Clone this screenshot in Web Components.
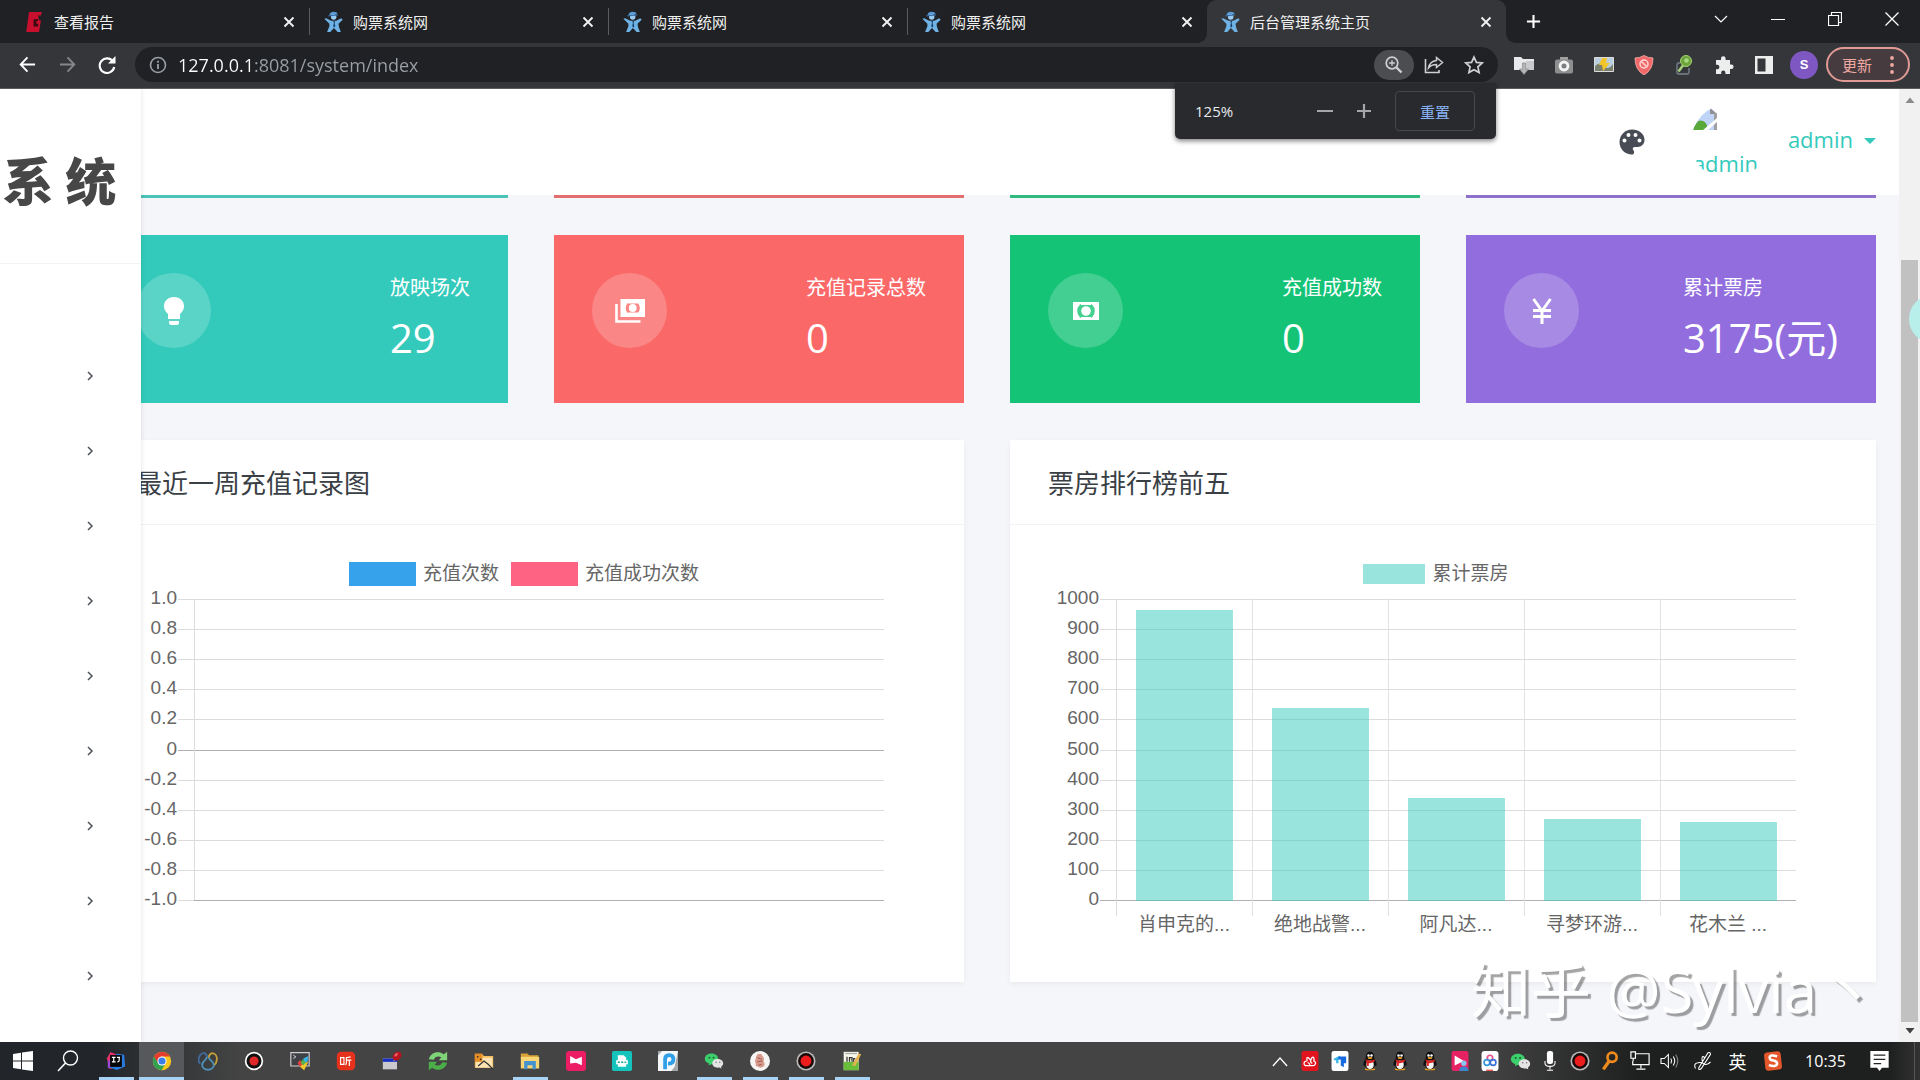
<!DOCTYPE html>
<html lang="zh-CN">
<head>
<meta charset="utf-8">
<title>后台管理系统主页</title>
<style>
*{box-sizing:border-box}
html,body{height:100%;margin:0}
body{display:flex;flex-direction:column;overflow:hidden;font-family:"Open Sans","Noto Sans CJK SC",sans-serif;font-size:15px;background:#f5f6fa;color:#4d5259}
admin-page{flex:1;min-height:0}
</style>
</head>
<body>
<browser-chrome></browser-chrome>
<admin-page></admin-page>
<task-bar></task-bar>
<script>
const RESET = '*{box-sizing:border-box}button{font:inherit;color:inherit;background:none;border:0;padding:0;margin:0;display:flex;align-items:center;justify-content:center}a{color:inherit;text-decoration:none}';

/* icon set: name -> [viewBox, markup] */
const PENGUIN = ['0 0 20 24','<path d="M6 23q-3 0-2-2h12q1 2-2 2z" fill="#e8a020"/><path d="M10 1c4 0 5 3 5 7 1 3 3 5 3 8 0 2-1 2-2 1-1 4-3 5-6 5s-5-1-6-5c-1 1-2 1-2-1 0-3 2-5 3-8 0-4 1-7 5-7z" fill="#101010"/><ellipse cx="10" cy="16.500" rx="4.500" ry="5" fill="#f5f5f5"/><circle cx="8.200" cy="5.500" r="1.500" fill="#fff"/><circle cx="11.800" cy="5.500" r="1.500" fill="#fff"/><ellipse cx="10" cy="8.300" rx="3" ry="1.200" fill="#f0a020"/><path d="M4.500 10q5.500 3 11 0v3q-4 2-7 1.600V18H6v-4z" fill="#d82424"/>'];
const RECORD = ['0 0 24 24','<circle cx="12" cy="12" r="11.500" fill="#b9b9b9"/><circle cx="12" cy="12" r="9.500" fill="#1a0a0a"/><circle cx="12" cy="12" r="6.500" fill="#ee1c1c"/>'];
const WECHAT = ['0 0 24 24','<path d="M9 3c5 0 8 3 8 6.500S14 16 9 16l-3.500 1 .5-2C3 14 1 12 1 9.500 1 6 4 3 9 3z" fill="#3ccf6c"/><circle cx="6.500" cy="8" r="1.100" fill="#155c2d"/><circle cx="11.500" cy="8" r="1.100" fill="#155c2d"/><path d="M16.500 9.500c3.500 0 6.500 2 6.500 5.200 0 2-1 3.300-2.500 4.200l.5 2-2.500-1c-5 .8-8.500-1.700-8.500-5.200s3-5.200 6.500-5.200z" fill="#e4e4e4"/><circle cx="14.500" cy="13.500" r=".9" fill="#777"/><circle cx="19" cy="13.500" r=".9" fill="#777"/>'];
const ICONS = {
 report:['0 0 18 24','<path d="M3 1h14l-1 4h-3l1 5h2l-2 13H0z" fill="#c8102e"/><path d="M8 9h5v2h-2v3h2v3H8z" fill="#3a0a12"/>'],
 mascot:['0 0 20 24','<path d="M5.500 4.500Q6 1 10 .8q4 0 4.500 2.700z" fill="#5b9bd5"/><circle cx="10.200" cy="6.500" r="3" fill="#9accf2"/><path d="M4.500 5.300l10.500-1" stroke="#3a70a8" stroke-width="1.200"/><path d="M0 8.500l2-.5 5.500 2.500h5.500L18.500 8l1.500 1.500L15.500 14l.5 3.500 2 5.500h-3.500l-4-4.500L6.500 23H3l2.500-6.500V14z" fill="#6fb2e6"/><path d="M9.800 11h2l-.6 2 .8 3.500-1.200 1.500-1.100-1.500.7-3.500z" fill="#17416b"/>'],
 close:['0 0 12 12','<path d="M1.500 1.500l9 9M10.500 1.500l-9 9" stroke="currentColor" stroke-width="1.900" fill="none"/>'],
 plus:['0 0 16 16','<path d="M8 1v14M1 8h14" stroke="currentColor" stroke-width="2.200"/>'],
 minus:['0 0 16 16','<path d="M0 8h16" stroke="currentColor" stroke-width="2"/>'],
 wdown:['0 0 14 14','<path d="M1 4l6 6 6-6" stroke="currentColor" fill="none" stroke-width="1.200"/>'],
 wmin:['0 0 14 14','<path d="M0 7.500h14" stroke="currentColor"/>'],
 wmax:['0 0 14 14','<path d="M.5 3.500h10v10H.5zM3.500 3V.5h10v10H11" stroke="currentColor" fill="none" stroke-width="1.200"/>'],
 wclose:['0 0 14 14','<path d="M.5.5l13 13M13.500.5l-13 13" stroke="currentColor" stroke-width="1.300"/>'],
 back:['0 0 18 18','<path d="M17 9H2M9 1.500L1.800 9 9 16.500" stroke="currentColor" stroke-width="2" fill="none"/>'],
 fwd:['0 0 18 18','<path d="M1 9h15M9 1.500L16.200 9 9 16.500" stroke="currentColor" stroke-width="2" fill="none"/>'],
 reload:['0 0 18 18','<path d="M15 5.500A7.300 7.300 0 1 0 16.200 11" stroke="currentColor" stroke-width="2.100" fill="none"/><path d="M17.500 0v7.500H10z" fill="currentColor"/>'],
 info:['0 0 18 18','<circle cx="9" cy="9" r="7.500" stroke="currentColor" stroke-width="1.600" fill="none"/><path d="M9 8v5M9 4.700v2" stroke="currentColor" stroke-width="1.800"/>'],
 zoom:['0 0 18 18','<circle cx="7" cy="7" r="5.800" stroke="currentColor" stroke-width="1.700" fill="none"/><path d="M4.200 7h5.600M7 4.200v5.600" stroke="currentColor" stroke-width="1.300"/><path d="M11.500 11.500l5 5" stroke="currentColor" stroke-width="2.400"/>'],
 share:['0 0 20 20','<path d="M1.500 4v13.500H15V15" stroke="currentColor" stroke-width="1.600" fill="none"/><path d="M12.500 2.500l6 5-6 5V9.600c-4 0-6 1-8 3.400.8-4.500 3.600-7.200 8-7.600z" stroke="currentColor" stroke-width="1.500" fill="none"/>'],
 star:['0 0 20 20','<path d="M10 2l2.400 5.400 5.800.6-4.300 3.900 1.200 5.700-5.100-2.900-5.100 2.900 1.200-5.700L1.800 8l5.800-.6z" stroke="currentColor" stroke-width="1.700" fill="none"/>'],
 folder:['0 0 20 20','<path d="M0 2h7l2 2h11v11H0z" fill="#e8e9ea"/><path d="M12 6h8v9h-8z" fill="#c9cacc"/><path d="M8.500 8h3v6h3L10 19.500 5.500 14h3z" fill="#b4b5b7" stroke="#8a8b8d" stroke-width=".7"/>'],
 camera:['0 0 20 20','<path d="M6 2h8v3H6z" fill="#a0a0a0"/><rect x="1" y="4.500" width="18" height="14" rx="2" fill="#8d8e90"/><circle cx="10" cy="11" r="5.400" fill="#f4f4f4"/><circle cx="10" cy="11" r="2.500" fill="#7c7d80"/>'],
 picture:['0 0 20 20','<path d="M.5 2.500h19v14H.5z" fill="#b9cfdf" stroke="#ddd"/><path d="M1 11q5-5 9 0t9-2v7H1z" fill="#79806e"/><path d="M8 3h5l-1 5h4l-7 8-1-6H5z" fill="#f3c52b"/>'],
 shield:['0 0 20 20','<path d="M10 .5q4 2.500 9 2.500 0 12-9 17Q1 15 1 3q5 0 9-2.500z" fill="#f0686a" stroke="#ffb4b0" stroke-width=".8"/><circle cx="10" cy="9" r="4" stroke="#ffd8d4" stroke-width="1.500" fill="none"/><path d="M7.500 6.500l5 5" stroke="#ffd8d4" stroke-width="1.500"/>'],
 racket:['0 0 20 20','<path d="M6 8H5q-2 0-2 2v7q0 2 2 2h8q2 0 2-2v-4" stroke="#68707a" stroke-width="1.800" fill="none"/><path d="M4.500 16.500L10 9" stroke="#a5cf78" stroke-width="2.500"/><circle cx="12" cy="6" r="5.500" fill="#6da43e" stroke="#a5d56f"/><circle cx="12.500" cy="5.500" r="2.200" fill="#a9d880"/>'],
 puzzle:['0 0 20 20','<path d="M2 5h5V3.500a2.300 2.300 0 0 1 4.600 0V5H16v4.500h1.300a2.300 2.300 0 0 1 0 4.600H16V19h-4.600v-1.500a2 2 0 0 0-4.200 0V19H2v-4.800h1.200a2.200 2.200 0 0 0 0-4.400H2z" fill="#eceded"/>'],
 panel:['0 0 20 20','<path d="M1 1h18v18H1z" fill="#eceded"/><path d="M3.500 3.500h8v13h-8z" fill="#35363a"/>'],
 dots:['0 0 4 18','<circle cx="2" cy="2" r="1.900" fill="currentColor"/><circle cx="2" cy="9" r="1.900" fill="currentColor"/><circle cx="2" cy="16" r="1.900" fill="currentColor"/>'],
 palette:['0 0 26 26','<path fill-rule="evenodd" d="M13 .5C20 .5 25.500 5 25.500 11c0 4-3 7-7 7h-2.500c-2.300 0-2.800 1.900-1.600 3.200 1.500 1.800.6 4.300-1.400 4.300C6 25.500.5 20 .5 13S6 .5 13 .5zM5.500 9.500a2 2 0 1 0 0 4 2 2 0 0 0 0-4zm4-5.500a2 2 0 1 0 0 4 2 2 0 0 0 0-4zm7 0a2 2 0 1 0 0 4 2 2 0 0 0 0-4zm4 5.500a2 2 0 1 0 0 4 2 2 0 0 0 0-4z" fill="#484c55"/>'],
 broken:['0 0 24 22','<path d="M0 0h18l6 6v16H0z" fill="#c0d4f7"/><path d="M17 0v6h7z" fill="#8f8f8f"/><path d="M22.500 5v17" stroke="#a0a0a0" stroke-width="3"/><path d="M0 22q4-12 10-9 4 1 5 9z" fill="#58a83a"/><path d="M9 23L24 10v4L14 23z" fill="#fff"/>'],
 caret:['0 0 12 6','<path d="M0 0h12L6 6z" fill="currentColor"/>'],
 chev:['0 0 8 10','<path d="M2 1l4 4-4 4" stroke="#4d5259" stroke-width="1.500" fill="none"/>'],
 bulb:['0 0 24 32','<path d="M12 2c6 0 10 4 10 9 0 4-2 6-4 8v5H6v-5c-2-2-4-4-4-8 0-5 4-9 10-9zM7 26h10v1.500q0 2.500-2.500 2.500h-5Q7 30 7 27.500z" fill="#fff"/>'],
 moneys:['0 0 30 26','<path d="M1.500 6v17.500h24" stroke="#fff" stroke-width="2.600" fill="none"/><path d="M5.500 1H30v18H5.500z" fill="#fff"/><circle cx="17.750" cy="10" r="5.500" stroke="#fb8686" stroke-width="3.200" fill="none"/><path d="M13 1h10v4.500H13zM13 14.500h10V19H13z" fill="#fff"/>'],
 money:['0 0 26 18','<path d="M0 0h26v18H0z" fill="#fff"/><circle cx="13" cy="9" r="6.800" stroke="#44d08f" stroke-width="4" fill="none"/><path d="M8 0h10v3H8zM8 15h10v3H8z" fill="#fff"/>'],
 yen:['0 0 20 26','<path d="M1.500 1L10 13l8.500-12M10 12v14M1 12.500h18M1 18.500h18" stroke="#fff" stroke-width="3" fill="none"/>'],
 sup:['0 0 16 16','<path d="M3.500 11L8 5.500l4.500 5.500z" fill="#8b8b8b"/>'],
 sdown:['0 0 16 16','<path d="M3.500 5L8 10.500 12.500 5z" fill="#404040"/>'],
 win:['0 0 20 20','<path d="M0 3l8-1.200V9.500H0zM9 1.600L20 0v9.500H9zM0 10.500h8v7.700L0 17zM9 10.500h11V20L9 18.400z" fill="#fff"/>'],
 search:['0 0 22 22','<circle cx="13.500" cy="8" r="7" stroke="#fff" stroke-width="1.400" fill="none"/><path d="M8.500 13L1 21" stroke="#fff" stroke-width="1.600"/>'],
 idea:['0 0 22 22','<path d="M1 8L5 1l7 3-2 14-6 2z" fill="#e6336e"/><path d="M12 3l8 1 1 13-9 4-9-3 1-4z" fill="#2a7be0"/><path d="M2 11l4-2v8l-4 2z" fill="#9b4bd8"/><path d="M4.500 4.500h13v13h-13z" fill="#060606"/><path d="M6.500 7h4M8.500 7v5M6.500 12h4M12 7h3.500M14.500 7v3.500q0 1.500-2 1.500" stroke="#fff" stroke-width="1.300" fill="none"/>'],
 chrome:['0 0 24 24','<circle cx="12" cy="12" r="11" fill="#f8c51c"/><path d="M2.500 6.500A11 11 0 0 0 11.500 23l5-8.500L12 12z" fill="#31a350"/><path d="M2.500 6.500A11 11 0 0 1 21.600 6.700H11L7 14z" fill="#e33b2e"/><circle cx="12" cy="12" r="5.500" fill="#fff"/><circle cx="12" cy="12" r="4.300" fill="#3b7ded"/>'],
 navicat:['0 0 24 24','<path d="M11 7C10 2 5 1 2.500 5S0 14 3 15" stroke="#416a9e" stroke-width="2.200" fill="none"/><path d="M13 8c0-4 3-6 6-5s4 5 3.500 8-2 6-4.500 6" stroke="#c5a13a" stroke-width="2.200" fill="none"/><path d="M11 7C9 12 5 12 5 17c0 3 3 5.500 7 5.500s7-2.500 7-5.500c0-5-5-5-6-9" stroke="#4d91b8" stroke-width="2.200" fill="none"/>'],
 recw:['0 0 24 24','<circle cx="12" cy="12" r="11" fill="#fff"/><circle cx="12" cy="12" r="9" fill="#111"/><circle cx="12" cy="12" r="5.500" fill="#e02828"/>'],
 term:['0 0 24 24','<path d="M1 2h22v16H1z" fill="#3d4145" stroke="#cfcfcf" stroke-width="1.400"/><path d="M4 5l3 2-3 2" stroke="#eee" fill="none"/><path d="M12 11l4 4-4 4-3-5z" fill="#e9403a"/><path d="M16 9l6-3-1 7-4 2z" fill="#38b3e8"/><path d="M16 15l6-2-5 10-5-4z" fill="#f2c42d"/><path d="M15 10l4 4-3 3-3-3z" fill="#54b64a"/>'],
 ting:['0 0 24 24','<rect x="1" y="1" width="22" height="22" rx="5" fill="#e6321c"/><path d="M5.500 8h4v8h-4zM17.500 7l-5 1v5q0 3-1 4M12.500 11h6M16 11v7" stroke="#fff" stroke-width="1.400" fill="none"/>'],
 pinwin:['0 0 24 24','<path d="M1 9h17v13H1z" fill="#c9c9ce"/><path d="M1 9h17v4H1z" fill="#1830c0"/><path d="M14 12l2-4" stroke="#999" stroke-width="1.500"/><ellipse cx="18" cy="6" rx="6" ry="4.500" transform="rotate(-45 18 6)" fill="#b81420"/><ellipse cx="17" cy="4.500" rx="2.500" ry="1.500" transform="rotate(-45 17 4.500)" fill="#e86068"/>'],
 sync:['0 0 24 24','<path d="M1 10C3 2 12-1 19 4l4-3v10H13l3-3.500c-4-2-8-.5-9 3z" fill="#7fd477"/><path d="M23 14c-2 8-11 11-18 6l-4 3V13h10l-3 3.500c4 2 8 .5 9-3z" fill="#4cae48"/>'],
 cards:['0 0 24 24','<path d="M1 4h9l2 2h11v14H1z" fill="#f5bd5c"/><path d="M2 8h20v12H2z" fill="#fde3b2"/><path d="M1 3h9v10H1z" fill="#e58d27"/><circle cx="4.500" cy="7" r="1" fill="#222"/><circle cx="8" cy="10" r="1" fill="#222"/><path d="M5 18l7-6 5 4 6 6" stroke="#333" fill="none" stroke-width="1.500"/>'],
 files:['0 0 24 24','<path d="M1 3h8l2 2h11v4H1z" fill="#d9a436"/><path d="M1 7h22v14H1z" fill="#f8d675"/><path d="M5 12h14v10h-4v-5H9v5H5z" fill="#4492cf"/>'],
 pinkapp:['0 0 24 24','<rect width="24" height="24" rx="4" fill="#ec1c65"/><path d="M5 6l7 4 7-3v10l-7-3-7 1z" fill="#fff"/>'],
 pdf:['0 0 24 24','<rect width="24" height="24" rx="2" fill="#14c3bb"/><path d="M7 5h7l3 3v11H7z" fill="#fff"/><path d="M5 11h14v5H5z" fill="#fff"/><path d="M7 13.500h2.500M11 13.500h2.500M15 13.500h2" stroke="#14a39b" stroke-width="1.800"/>'],
 papp:['0 0 24 24','<path d="M0 0h24v24H0z" fill="#a5a8aa"/><path d="M5 0h19L20 19 16 24H0V5z" fill="#f4f8fa"/><path d="M8.500 22V10q0-5 5-5t5 5-5 5H12" stroke="#2f9fe8" stroke-width="4.500" fill="none"/>'],
 brain:['0 0 24 24','<circle cx="12" cy="12" r="12" fill="#f6f5f3"/><path d="M9 4q5-2 6 2 3 3 1 6 3 4 0 7-4 2-6 0-4 0-3-4-2-3 0-6 0-3 2-5z" fill="#d99a8d"/><path d="M9 8l5 2M9 13l6-1M10 17l4-1" stroke="#8d4e46"/>'],
 note:['0 0 24 24','<path d="M2 1h18v22H2z" fill="#f5f5e8"/><path d="M2 13h18v10H2z" fill="#6abd3b"/><path d="M4 3h14" stroke="#aaa" stroke-width="1.500"/><path d="M6 13V7M9 13V8h3v5M14 13V9h2" stroke="#333" stroke-width="1.500" fill="none"/><path d="M12 17L20 3l3 1-7 14z" fill="#e3b24d"/>'],
 up:['0 0 18 12','<path d="M1 11L9 2l8 9" stroke="#fff" stroke-width="1.500" fill="none"/>'],
 redcloud:['0 0 22 26','<rect width="22" height="26" rx="3" fill="#e2141e"/><path d="M5 19q-3-2-1-5 1-1 3-1V9q2-1 3 1l2 2q1-4 3-4 2 1 1 5 3 1 2 4-1 2-3 2zM8 15q2 0 3 3M12 12q-1 3 2 4" stroke="#fff" stroke-width="1.600" fill="none"/>'],
 todesk:['0 0 22 26','<rect width="22" height="26" rx="3" fill="#fff"/><path d="M3 10l8-4v5H9v5H6v-4H3z" fill="#35b4e9"/><path d="M9 7h10v9h-3v5l-4-2v-8H9z" fill="#1769e0"/>'],
 penguin:PENGUIN, record:RECORD, wechat:WECHAT,
 pinkuser:['0 0 22 26','<rect width="22" height="26" rx="3" fill="#e62263"/><path d="M4 6l12 7-12 6z" fill="#fff"/><circle cx="16" cy="16" r="3.500" fill="#8fc4f0"/><path d="M10 26q0-6 6-6t6 6z" fill="#3c86d0"/>'],
 netdisk:['0 0 22 26','<rect width="22" height="26" rx="4" fill="#fff"/><circle cx="11" cy="9" r="3.500" stroke="#e6518c" stroke-width="2.200" fill="none"/><circle cx="7" cy="15" r="3.700" stroke="#3498db" stroke-width="2.200" fill="none"/><circle cx="15" cy="15" r="3.700" stroke="#3a70d8" stroke-width="2.200" fill="none"/><path d="M6 25h9" stroke="#d33" stroke-width="1.500"/>'],
 mic:['0 0 16 26','<rect x="4" y="0" width="8" height="17" rx="3" fill="#fff"/><path d="M1.500 13v3q0 4 6.500 4t6.500-4v-3M8 20v4M4 25h8" stroke="#fff" stroke-width="1.400" fill="none"/>'],
 orange:['0 0 20 24','<circle cx="12.500" cy="7.500" r="5.500" stroke="#ef8a1c" stroke-width="3.200" fill="none"/><path d="M9 12l-7 10" stroke="#ef8a1c" stroke-width="4"/>'],
 monitor:['0 0 22 22','<path d="M6 3h15v12H3v-4M12 15v4M7 20h10M1 1h5v7H1zM3.500 8v3" stroke="#fff" stroke-width="1.300" fill="none"/>'],
 speaker:['0 0 24 22','<path d="M1 8h4l5-5v16l-5-5H1z" stroke="#fff" stroke-width="1.300" fill="none"/><path d="M13 8q2 3 0 6M16 5.500q3.500 5.500 0 11" stroke="#fff" stroke-width="1.300" fill="none"/><path d="M19 3q5 8 0 16" stroke="#888" stroke-width="1.300" fill="none"/>'],
 pen:['0 0 22 24','<path d="M2 21q-3-6 3-7 5-1 8 2 4 1 7-3M6 20L17 2q3-1 3 2L9 21q-4 3-3-1zM10 12q-1-8 3-4" stroke="#fff" stroke-width="1.300" fill="none"/>'],
 sogou:['0 0 22 24','<rect x="1" y="1" width="20" height="22" rx="4" fill="#e4572a" transform="rotate(-6 11 12)"/><path d="M16 6.500q-9-3-9 1.500 0 3 4.500 3.500t4.500 4q-1 4-10 1.500" stroke="#fff" stroke-width="3" fill="none"/>'],
 action:['0 0 22 24','<path d="M0 0h22v20h-8l-3 4-3-4H0z" fill="#fff"/><path d="M4 5h14M4 10h14M4 15h9" stroke="#222" stroke-width="1.500"/>']
};

class UiIcon extends HTMLElement{
  connectedCallback(){
    const [vb,m]=ICONS[this.getAttribute('name')];
    const w=this.getAttribute('w')||20,h=this.getAttribute('h')||w;
    (this.shadowRoot||this.attachShadow({mode:'open'})).innerHTML=`<style>:host{display:inline-flex;flex:none}svg{display:block}</style><svg width="${w}" height="${h}" viewBox="${vb}" aria-hidden="true">${m}</svg>`;
  }
}
customElements.define('ui-icon',UiIcon);

const define=(name,render)=>customElements.define(name,class extends HTMLElement{
  connectedCallback(){ if(!this.shadowRoot) this.attachShadow({mode:'open'}).innerHTML=`<style>${RESET}</style>`+render(this); }
});
const ic=(n,w,h)=>`<ui-icon name="${n}" w="${w}" h="${h||w}"></ui-icon>`;

define('browser-tab',el=>`
<style>
:host{display:flex;align-items:center;flex:0 1 299px;min-width:0;height:43px;padding:0 14px;color:#f1f1f1;position:relative}
:host([line]){border-right:1px solid transparent;border-image:linear-gradient(transparent 9px,#5a5b5e 9px,#5a5b5e 34px,transparent 34px) 1}
:host([active]){background:#35363a;border-radius:9px 9px 0 0}
:host([active])::before,:host([active])::after{content:"";position:absolute;bottom:0;width:10px;height:10px}
:host([active])::before{left:-10px;background:radial-gradient(circle at 0 0,transparent 10px,#35363a 10px)}
:host([active])::after{right:-10px;background:radial-gradient(circle at 100% 0,transparent 10px,#35363a 10px)}
span{flex:1;margin-left:10px;line-height:24px;white-space:nowrap}
</style>${ic(el.getAttribute('icon'),19,22)}<span><slot></slot></span><button aria-label="关闭">${ic('close',12)}</button>`);

define('zoom-bubble',()=>`
<style>
:host{display:flex;align-items:center;width:321px;height:56px;padding:0 21px 0 20px;background:#292a2d;border-radius:0 0 5px 5px;box-shadow:0 2px 5px rgba(0,0,0,.5);color:#e8eaed}
span{flex:1}
.g{display:flex;gap:23px;color:#a5a6a8;margin-right:23px}
.r{width:80px;height:40px;border:1px solid #46474b;border-radius:4px;color:#8ab4f8}
</style><span>125%</span><div class="g"><button aria-label="缩小">${ic('minus',16)}</button><button aria-label="放大">${ic('plus',16)}</button></div><button class="r">重置</button>`);

define('browser-chrome',()=>`
<style>
:host{display:block;background:#202124;color:#fff;position:relative;z-index:5;flex:none}
.tabs{display:flex;height:43px;padding-left:11px}
.new{width:54px;padding-bottom:1px}
.win{display:flex;margin-left:auto;padding-bottom:6px}
.win button{width:57px}
.bar{display:flex;align-items:center;height:46px;padding:0 10px 2px 7px;background:#35363a;border-bottom:1px solid #5b5c60}
.bar>button{width:40px;height:34px}
.off{color:#85868a}
.omni{flex:1;display:flex;align-items:center;height:35px;background:#202124;border-radius:18px;margin:0 6px 0 8px;padding:0 4px 0 14px;color:#9aa0a6}
.omni button{width:40px;height:30px;border-radius:15px;color:#cfd0d2}
.omni .z{background:#4c4d50}
input{flex:1;min-width:0;border:0;outline:0;padding:0;margin-left:11px;height:30px;font:inherit;font-size:18px;color:transparent;background:linear-gradient(90deg,#fff 77px,#9aa0a6 77px);-webkit-background-clip:text;background-clip:text}
.bar .me{width:28px;height:28px;margin:0 6px;border-radius:50%;background:#7e57c2;font:bold 13px "Liberation Sans",sans-serif}
.bar .up{width:84px;height:35px;margin-left:2px;gap:18px;border:2px solid #e09a96;border-radius:18px;background:#463c3f;color:#f0a8a2}
zoom-bubble{position:absolute;right:424px;top:83px}
</style>
<div class="tabs">
<browser-tab icon="report" line>查看报告</browser-tab><browser-tab icon="mascot" line>购票系统网</browser-tab><browser-tab icon="mascot" line>购票系统网</browser-tab><browser-tab icon="mascot">购票系统网</browser-tab><browser-tab icon="mascot" active>后台管理系统主页</browser-tab>
<button class="new" aria-label="新标签页">${ic('plus',15)}</button>
<div class="win">${[['wdown','搜索标签页'],['wmin','最小化'],['wmax','还原'],['wclose','关闭']].map(([n,l])=>`<button aria-label="${l}">${ic(n,14)}</button>`).join('')}</div>
</div>
<div class="bar">
<button aria-label="后退">${ic('back',17)}</button><button class="off" aria-label="前进">${ic('fwd',17)}</button><button aria-label="刷新">${ic('reload',18)}</button>
<div class="omni">${ic('info',18)}<input aria-label="地址" value="127.0.0.1:8081/system/index"><button class="z" aria-label="缩放">${ic('zoom',18)}</button><button aria-label="分享">${ic('share',20)}</button><button aria-label="收藏">${ic('star',20)}</button></div>
${['folder','camera','picture','shield','racket','puzzle','panel'].map(n=>`<button aria-label="${n}">${ic(n,20)}</button>`).join('')}
<button class="me">S</button><button class="up">更新${ic('dots',4,18)}</button>
</div><zoom-bubble></zoom-bubble>`);

define('side-nav',()=>`
<style>
:host{display:block;flex:0 0 141px;background:#fff;box-shadow:0 0 5px rgba(0,0,0,.12);overflow:hidden;z-index:2}
h1{margin:0;height:175px;padding:54px 22px 0 0;font:900 51px/72px "Noto Sans CJK SC",sans-serif;color:#474747;white-space:nowrap;border-bottom:1px solid #f3f3f3;text-align:center}
nav{padding-top:74px}
nav button{width:100%;height:75px;padding-left:39px}
</style><h1>系 统</h1><nav>${Array(9).fill(`<button aria-label="展开">${ic('chev',8,10)}</button>`).join('')}</nav>`);

define('top-bar',()=>`
<style>
:host{display:flex;align-items:center;justify-content:flex-end;height:106px;padding-right:23px;background:#fff;color:#33cabb;font-size:22px;line-height:30px}
.av{width:76px;height:76px;margin:0 21px 0 46px;border-radius:50%;overflow:hidden;display:block;padding:1px 0 0 2px;text-align:left}
.av ui-icon,.av span{display:block}
.av span{margin-top:18px}
.u{gap:11px;padding-bottom:6px}
.u ui-icon{padding-top:4px}
</style><button aria-label="主题">${ic('palette',26)}</button><button class="av">${ic('broken',24,22)}<span>admin</span></button><button class="u">admin ${ic('caret',12,6)}</button>`);

define('stat-card',el=>`
<style>
:host{display:flex;justify-content:space-between;height:168px;padding:38px;background:var(--c);color:#fff}
.i{width:75px;height:75px;border-radius:50%;background:rgba(255,255,255,.2);display:flex;align-items:center;justify-content:center}
p{margin:0 0 10px;font-size:20px;line-height:30px}
strong{display:block;font-weight:400;font-size:40px;line-height:50px}
</style><div class="i"><slot></slot></div><div><p>${el.getAttribute('label')}</p><strong>${el.getAttribute('value')}</strong></div>`);

define('chart-panel',el=>`
<style>
:host{display:block;background:#fff;height:542px;box-shadow:0 2px 5px rgba(0,0,0,.05)}
h2{margin:0;height:85px;padding:0 38px;font-weight:400;font-size:26px;line-height:87px;color:#3a3f46;border-bottom:1px solid #f2f2f3}
</style><h2>${el.getAttribute('heading')}</h2><slot></slot>`);

define('bar-chart',el=>{
  const d=JSON.parse(el.getAttribute('data'));
  return `
<style>
:host{display:block;padding:37px 80px 0 38px;font:19px/24px "Liberation Sans","Noto Sans CJK SC",sans-serif;color:#666}
.leg{display:flex;justify-content:center;gap:12px;height:24px;margin:0 -66px 13px -38px}
.leg span{display:flex;align-items:center;gap:7px}
.leg i{width:var(--sw,67px);height:var(--sh,24px)}
.plot{display:grid;height:317px;grid-template-columns:${d.lw}px 16px 1fr;grid-template-rows:repeat(10,minmax(0,1fr)) 16px}
.lab{grid-column:1;text-align:right;height:24px;margin-top:-13px;padding-right:1px}
.t{border-top:1px solid #dcdcdc;grid-column:2/4}
.z{border-color:#b0b0b0}
.cols{grid-column:3;grid-row:1/12;display:flex;border-left:1px solid #dcdcdc}
.col{flex:1;display:flex;align-items:flex-end;justify-content:center;padding-bottom:15px}
.col+.col{border-left:1px solid #e2e2e2}
.col i{width:72%;background:rgba(51,202,187,.5)}
.x{display:flex;margin-left:${d.lw+16}px;margin-top:-3px}
.x span{flex:1;text-align:center}
.short{margin-bottom:16px}
</style>
<div class="leg">${d.legend.map(([c,t])=>`<span><i style="background:${c}"></i>${t}</span>`).join('')}</div>
<div class="plot">
${d.ticks.map((t,i)=>`<span class="lab" style="grid-row:${i+1}">${t}</span><i class="t ${t==='0'?'z':''}" style="grid-row:${i+1}"></i>`).join('')}
${d.bars.length?'':'<i class="t z" style="grid-row:11;grid-column:3"></i>'}
<div class="cols ${d.bars.length?'':'short'}">${d.bars.map(b=>`<div class="col"><i style="height:${Math.round(b[1]*.301)}px"></i></div>`).join('')}</div>
</div><div class="x">${d.bars.map(b=>`<span>${b[0]}</span>`).join('')}</div>`;});

define('page-scroll',()=>`
<style>
:host{display:flex;flex-direction:column;align-items:center;flex:0 0 21px;background:#f1f1f1;padding:3px 0}
i{width:17px;margin:152px 0 1px;flex:1;background:#c1c1c1}
</style>${ic('sup',16)}<i></i>${ic('sdown',16)}`);

define('admin-page',()=>`
<style>
:host{display:flex;position:relative;overflow:hidden;background:#f5f6fa}
main{flex:1;min-width:0;margin-left:-141px;padding-left:98px}
.edge,.cards,.charts{display:grid;grid-template-columns:repeat(4,1fr);gap:46px;margin-right:23px}
.edge i{height:3px;background:var(--c);filter:saturate(.8)}
.edge{margin-bottom:37px}
.charts{grid-template-columns:repeat(2,1fr);margin-top:37px}
top-bar{margin-left:-98px}
.mark{position:absolute;right:43px;bottom:11px;font-size:60px;line-height:82px;color:#fff;text-shadow:3px 3px 1px rgba(0,0,0,.36);white-space:nowrap}
.fab{position:absolute;right:-37px;top:206px;width:48px;height:48px;border-radius:50%;background:#b9efea}
</style>
<side-nav></side-nav>
<main><top-bar></top-bar>
<div class="edge"><i style="--c:#33cabb"></i><i style="--c:#f96868"></i><i style="--c:#15c377"></i><i style="--c:#926dde"></i></div>
<div class="cards">
<stat-card style="--c:#33cabb" label="放映场次" value="29">${ic('bulb',24,32)}</stat-card>
<stat-card style="--c:#fb6868" label="充值记录总数" value="0">${ic('moneys',30,26)}</stat-card>
<stat-card style="--c:#15c377" label="充值成功数" value="0">${ic('money',26,18)}</stat-card>
<stat-card style="--c:#926dde" label="累计票房" value="3175(元)">${ic('yen',20,26)}</stat-card>
</div>
<div class="charts">
<chart-panel heading="最近一周充值记录图"><bar-chart data='{"lw":42,"legend":[["#36a2eb","充值次数"],["#ff6384","充值成功次数"]],"ticks":["1.0","0.8","0.6","0.4","0.2","0","-0.2","-0.4","-0.6","-0.8","-1.0"],"bars":[]}'></bar-chart></chart-panel>
<chart-panel heading="票房排行榜前五"><bar-chart style="--sw:62px;--sh:20px" data='{"lw":52,"legend":[["#99e5dd","累计票房"]],"ticks":["1000","900","800","700","600","500","400","300","200","100","0"],"bars":[["肖申克的...",968],["绝地战警...",642],["阿凡达...",341],["寻梦环游...",272],["花木兰 ...",262]]}'></bar-chart></chart-panel>
</div></main>
<page-scroll></page-scroll>
<div class="mark">知乎 @Sylvia丶</div><button class="fab" aria-label="助手"></button>`);

define('task-bar',()=>`
<style>
:host{display:flex;flex:none;height:38px;color:#fff;background:linear-gradient(90deg,#22262a 0,#22262a 100px,#444 240px,#444 1480px,#1e1f1f 1640px,#1e1f1f 1890px,#333 1920px)}
button{height:38px;flex:none}
.s{width:45px}
.apps{display:flex;margin:0 auto 0 3px}
.apps button{width:46px}
.run{background:linear-gradient(#a9d3f5,#a9d3f5) center bottom/35px 3px no-repeat}
.apps .on{width:45px;margin-right:1px;background:linear-gradient(#a9d3f5,#a9d3f5) center bottom/45px 3px no-repeat #57585b}
.tray,.sys{display:flex}
.tray button{width:30px}
.sys button{width:35px;font-size:18px}
.sys .clk{width:71px;font-size:16px}
.sys .act{width:36px;margin-right:17px}
.sys .desk{border-left:1px solid #555;width:6px}
</style>
<button class="s" aria-label="开始">${ic('win',20)}</button><button class="s" aria-label="搜索">${ic('search',22)}</button>
<div class="apps">${[['idea',1],['chrome',2],['navicat'],['recw'],['term'],['ting'],['pinwin'],['sync'],['cards'],['files',1],['pinkapp'],['pdf'],['papp'],['wechat',1],['brain',1],['record',1],['note',1]].map(([n,r])=>`<button class="${r==2?'on':r?'run':''}" aria-label="${n}">${ic(n,20)}</button>`).join('')}</div>
<div class="tray">${[['up',16,11],['redcloud',20,20],['todesk',20,20],['penguin',18,20],['penguin',18,20],['penguin',18,20],['pinkuser',20,20],['netdisk',20,20],['wechat',21,21],['mic',14,20],['record',20,20],['orange',18,20],['monitor',20,20],['speaker',20,18]].map(([n,w,h])=>`<button aria-label="${n}">${ic(n,w,h)}</button>`).join('')}</div>
<div class="sys"><button aria-label="手写">${ic('pen',20,20)}</button><button>英</button><button aria-label="输入法">${ic('sogou',20,20)}</button><button class="clk">10:35</button><button class="act" aria-label="通知">${ic('action',21,20)}</button><button class="desk" aria-label="显示桌面"></button></div>`);
</script>
</body>
</html>
